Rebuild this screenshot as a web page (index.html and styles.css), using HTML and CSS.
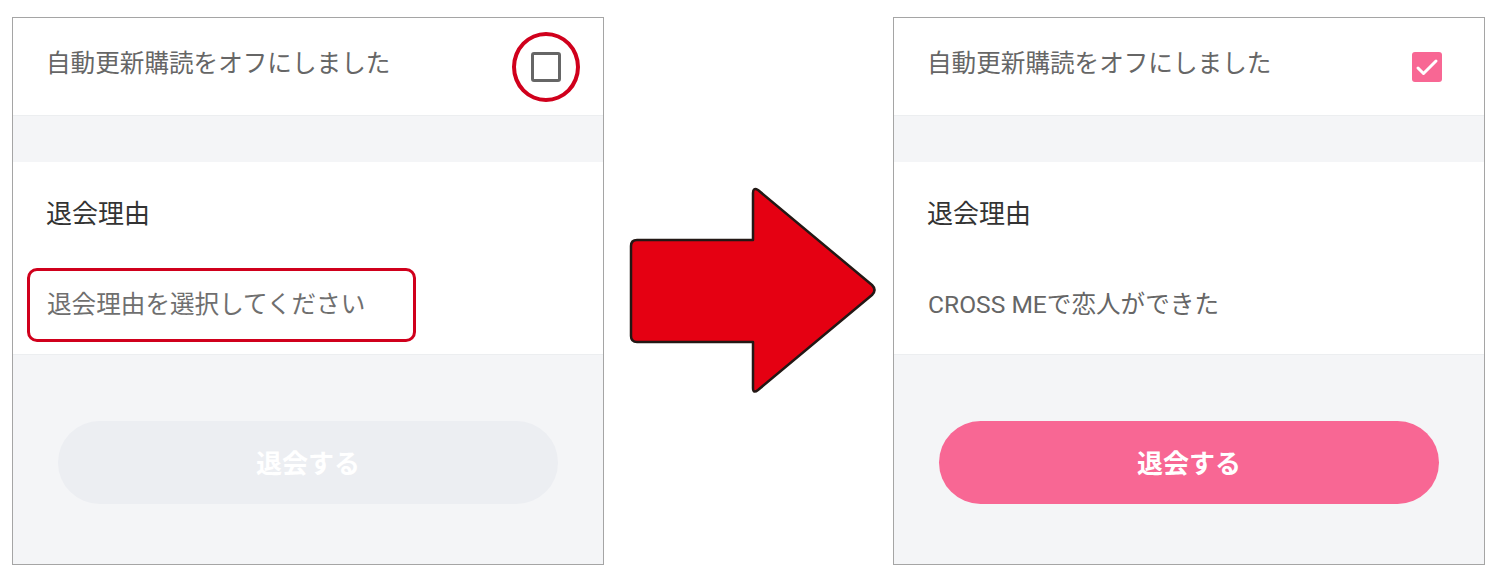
FILE: index.html
```html
<!DOCTYPE html>
<html>
<head>
    <link rel="stylesheet" href="styles.css">
</head>
<body>
    <div class="compare">
        <!-- before -->
        <div class="panel">
            <div class="row-header">
                <span class="row-text">自動更新購読をオフにしました</span>
                <span class="check-wrap marked">
                    <span class="checkbox"></span>
                </span>
            </div>
            <div class="spacer"></div>
            <div class="reason">
                <h3 class="reason-title">退会理由</h3>
                <div class="select-row">
                    <div class="select-box marked-box">退会理由を選択してください</div>
                </div>
            </div>
            <div class="footer">
                <button class="leave-btn" disabled>退会する</button>
            </div>
        </div>

        <svg class="arrow" width="250" height="210" viewBox="0 0 250 210">
            <path d="M8,54 H124 V7 Q124,1 129,4 L243,99 Q248,104 243,109 L129,204 Q124,208 124,202 V156 H8 Q2,156 2,150 V60 Q2,54 8,54 Z"
                  fill="#e50012" stroke="#231815" stroke-width="2.5" stroke-linejoin="round"/>
        </svg>

        <!-- after -->
        <div class="panel">
            <div class="row-header">
                <span class="row-text">自動更新購読をオフにしました</span>
                <span class="check-wrap">
                    <span class="checkbox checked">
                        <svg width="30" height="30" viewBox="0 0 30 30">
                            <path d="M6,16 L11.5,21.5 L24,9" fill="none" stroke="#fff" stroke-width="3" stroke-linecap="round" stroke-linejoin="round"/>
                        </svg>
                    </span>
                </span>
            </div>
            <div class="spacer"></div>
            <div class="reason">
                <h3 class="reason-title">退会理由</h3>
                <div class="select-row">
                    <div class="select-box selected">CROSS MEで恋人ができた</div>
                </div>
            </div>
            <div class="footer">
                <button class="leave-btn active">退会する</button>
            </div>
        </div>
    </div>
</body>
</html>
```

FILE: styles.css
```css
body {
    margin: 0;
    background: #fff;
    font-family: Roboto, "Noto Sans CJK JP", sans-serif;
}

.compare {
    display: flex;
    align-items: center;
    padding: 17px 0 0 12px;
}

.panel {
    width: 592px;
    height: 548px;
    box-sizing: border-box;
    border: 1px solid #a5a5a5;
    display: flex;
    flex-direction: column;
    flex-shrink: 0;
}

.arrow {
    display: block;
    margin: 0 14px 0 25px;
    flex-shrink: 0;
}

.row-header {
    height: 97px;
    display: flex;
    align-items: center;
    justify-content: space-between;
    padding: 0 42px 0 33px;
    background: #fff;
}

.row-text {
    font-size: 24.6px;
    color: #666;
    margin-bottom: 12px;
}

.check-wrap {
    position: relative;
    display: flex;
}

/* red annotation circle */
.check-wrap.marked::after {
    content: "";
    position: absolute;
    top: -20px;
    bottom: -20px;
    left: -19px;
    right: -19px;
    border: 4px solid #d0001c;
    border-radius: 50%;
}

.checkbox {
    width: 30px;
    height: 30px;
    box-sizing: border-box;
    border: 3px solid #666;
    border-radius: 3px;
    display: flex;
    align-items: center;
    justify-content: center;
}

.checkbox.checked {
    border: none;
    background: #f86794;
}

.spacer {
    height: 47px;
    background: #f4f5f7;
    border-top: 1px solid #eceef0;
    box-sizing: border-box;
}

.reason {
    height: 192px;
    background: #fff;
    padding-top: 34px;
    box-sizing: border-box;
}

.reason-title {
    margin: 0 0 36px 33px;
    font-size: 26px;
    line-height: 36px;
    font-weight: 400;
    color: #333;
}

.select-row {
    padding-left: 14px;
}

.select-box {
    width: 389px;
    height: 74px;
    box-sizing: border-box;
    border: 3px solid transparent;
    border-radius: 10px;
    padding: 0 0 6px 17px;
    display: flex;
    align-items: center;
    font-size: 24.6px;
    color: #6f6f6f;
}

.select-box.marked-box {
    border-color: #d0001c;
}

.select-box.selected {
    color: #666;
}

.footer {
    flex: 1;
    background: #f4f5f7;
    border-top: 1px solid #eceef0;
    padding: 66px 45px 0;
}

.leave-btn {
    width: 100%;
    height: 83px;
    border: none;
    border-radius: 42px;
    background: #eceef2;
    color: #fff;
    font-family: Roboto, "Noto Sans CJK JP", sans-serif;
    font-size: 26px;
    font-weight: 700;
    padding-bottom: 4px;
}

.leave-btn.active {
    background: #f86794;
}
```
